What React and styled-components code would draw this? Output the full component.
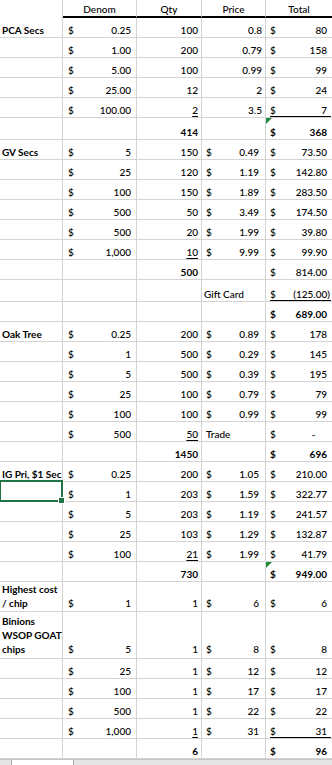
import React from 'react';
import styled, { createGlobalStyle } from 'styled-components';

const GRID = '#d4d4d4';
const GREEN = '#217346';

const GlobalStyle = createGlobalStyle`
  html, body { margin: 0; padding: 0; background: #ffffff; }
  body {
    font-family: Lato, "Open Sans", "Liberation Sans", sans-serif;
    font-size: 10px;
    color: #000;
    overflow: hidden;
  }
`;

const Page = styled.div`
  width: 332px;
  height: 765px;
  display: flex;
  flex-direction: column;
  overflow: hidden;
`;

const Sheet = styled.div`
  display: flex;
  flex-direction: column;
  flex: none;
`;

const Row = styled.div`
  display: grid;
  grid-template-columns: 63px 74px 65px 64px 66px;
  height: ${p => p.$h}px;
  flex: none;
  & > *:last-child { border-right: none; }
`;

const Cell = styled.div`
  position: relative;
  box-sizing: border-box;
  min-width: 0;
  display: flex;
  align-items: flex-end;
  border-right: 1px solid ${GRID};
  border-bottom: 1px solid ${GRID};
  line-height: 14px;
  white-space: nowrap;
  padding-bottom: ${p => p.$pb ?? 0}px;
  font-weight: ${p => (p.$bold ? 700 : 500)};
`;

const HeadCell = styled(Cell)`
  justify-content: center;
  padding-bottom: 0;
  border-bottom: ${p => (p.$blank ? 'none' : '2px solid #000')};
`;

const LabelCell = styled(Cell)`
  font-weight: 700;
  padding-left: 2px;
  overflow: hidden;
`;

const SelectedCell = styled(Cell)`
  overflow: visible;
  z-index: 2;
`;

const NumCell = styled(Cell)`
  justify-content: flex-end;
  padding-right: 3px;
`;

const TextCell = styled(Cell)`
  padding-left: ${p => p.$pl}px;
`;

const AcctCell = styled(Cell)`
  padding-left: ${p => p.$pl}px;
  padding-right: ${p => p.$edge}px;
`;

const AcctBody = styled.div`
  flex: 1;
  display: flex;
  justify-content: space-between;
  align-items: flex-end;
  align-self: stretch;
  box-shadow: ${p => (p.$ul ? 'inset 0 -1px 0 #000' : 'none')};
`;

const Amount = styled.span`
  padding-right: ${p => p.$pr}px;
`;

const Dash = styled.span`
  padding-right: 4px;
  margin-right: 2ch;
`;

const Underlined = styled.span`
  text-decoration: underline;
  text-decoration-thickness: 1px;
  text-underline-offset: 1.5px;
`;

const Selection = styled.span`
  position: absolute;
  top: -2px;
  left: -1px;
  right: -1px;
  bottom: -1px;
  border: 2px solid ${GREEN};
  pointer-events: none;
`;

const Handle = styled.span`
  position: absolute;
  right: -3px;
  bottom: -3px;
  width: 5px;
  height: 5px;
  background: ${GREEN};
  box-shadow: 0 0 0 1px #ffffff;
`;

const ErrorMark = styled.span`
  position: absolute;
  top: 0;
  left: 0;
  width: 0;
  height: 0;
  border-top: 6px solid #1e8a3a;
  border-right: 6px solid transparent;
`;

const TabBar = styled.div`
  flex: 1;
  display: flex;
  background: #e6e6e6;
  border-top: 1px solid #c6c6c6;
`;

const TabGap = styled.div`
  width: 11px;
`;

const Tab = styled.div`
  width: 61px;
  background: #ffffff;
  border-left: 1px solid #a8a8a8;
  border-right: 1px solid #a8a8a8;
`;

/* column presets for accounting format */
const ACCT = {
  b: { pl: 5, edge: 1, pr: 4 },
  d: { pl: 4, edge: 2, pr: 4 },
  e: { pl: 4, edge: 1, pr: 4 },
};

const a = (v, o = {}) => ({ t: 'acct', v, ...o });
const n = (v, o = {}) => ({ t: 'num', v, ...o });

const rows = [
  { h: 20, a: ['PCA Secs'], b: a('0.25'), c: n('100'), d: n('0.8'), e: a('80') },
  { h: 20, b: a('1.00'), c: n('200'), d: n('0.79'), e: a('158') },
  { h: 20, b: a('5.00'), c: n('100'), d: n('0.99'), e: a('99') },
  { h: 20, b: a('25.00'), c: n('12'), d: n('2'), e: a('24') },
  { h: 20, b: a('100.00'), c: n('2', { u: true }), d: n('3.5'), e: a('7', { ul: true }) },
  { h: 22, c: n('414', { bold: true }), e: a('368', { bold: true, mark: true }) },
  { h: 20, a: ['GV Secs'], b: a('5'), c: n('150'), d: a('0.49'), e: a('73.50') },
  { h: 20, b: a('25'), c: n('120'), d: a('1.19'), e: a('142.80') },
  { h: 20, b: a('100'), c: n('150'), d: a('1.89'), e: a('283.50') },
  { h: 20, b: a('500'), c: n('50'), d: a('3.49'), e: a('174.50') },
  { h: 20, b: a('500'), c: n('20'), d: a('1.99'), e: a('39.80') },
  { h: 20, b: a('1,000'), c: n('10', { u: true }), d: a('9.99'), e: a('99.90') },
  { h: 20, c: n('500', { bold: true }), e: a('814.00') },
  { h: 22, d: { t: 'text', v: 'Gift Card', pl: 2 }, e: a('(125.00)', { neg: true, ul: true }) },
  { h: 20, e: a('689.00', { bold: true }) },
  { h: 20, a: ['Oak Tree'], b: a('0.25'), c: n('200'), d: a('0.89'), e: a('178') },
  { h: 20, b: a('1'), c: n('500'), d: a('0.29'), e: a('145') },
  { h: 20, b: a('5'), c: n('500'), d: a('0.39'), e: a('195') },
  { h: 20, b: a('25'), c: n('100'), d: a('0.79'), e: a('79') },
  { h: 20, b: a('100'), c: n('100'), d: a('0.99'), e: a('99') },
  { h: 20, b: a('500'), c: n('50', { u: true }), d: { t: 'text', v: 'Trade', pl: 4 }, e: a('-', { dash: true }) },
  { h: 20, c: n('1450', { bold: true }), e: a('696', { bold: true }) },
  { h: 20, a: ['IG Pri, $1 Sec'], b: a('0.25'), c: n('200'), d: a('1.05'), e: a('210.00') },
  { h: 20, selected: true, b: a('1'), c: n('203'), d: a('1.59'), e: a('322.77') },
  { h: 20, b: a('5'), c: n('203'), d: a('1.19'), e: a('241.57') },
  { h: 20, b: a('25'), c: n('103'), d: a('1.29'), e: a('132.87') },
  { h: 20, b: a('100'), c: n('21', { u: true }), d: a('1.99'), e: a('41.79') },
  { h: 20, c: n('730', { bold: true }), e: a('949.00', { bold: true, mark: true }) },
  { h: 30, pb: 1, a: ['Highest cost', '/ chip'], b: a('1'), c: n('1'), d: a('6'), e: a('6') },
  { h: 47, pb: 2, a: ['Binions', 'WSOP GOAT', 'chips'], b: a('5'), c: n('1'), d: a('8'), e: a('8') },
  { h: 20, b: a('25'), c: n('1'), d: a('12'), e: a('12') },
  { h: 20, b: a('100'), c: n('1'), d: a('17'), e: a('17') },
  { h: 20, b: a('500'), c: n('1'), d: a('22'), e: a('22') },
  { h: 20, b: a('1,000'), c: n('1', { u: true }), d: a('31'), e: a('31', { ul: true }) },
  { h: 20, c: n('6', { bold: true }), e: a('96', { bold: true }) },
];

function renderCell(col, data, pb, key) {
  if (!data) return <Cell key={key} $pb={pb} />;
  if (data.t === 'num') {
    return (
      <NumCell key={key} $pb={pb} $bold={data.bold}>
        {data.u ? <Underlined>{data.v}</Underlined> : data.v}
      </NumCell>
    );
  }
  if (data.t === 'text') {
    return (
      <TextCell key={key} $pb={pb} $pl={data.pl}>
        {data.v}
      </TextCell>
    );
  }
  const cfg = ACCT[col];
  return (
    <AcctCell key={key} $pb={pb} $pl={cfg.pl} $edge={cfg.edge} $bold={data.bold}>
      {data.mark && <ErrorMark />}
      <AcctBody $ul={data.ul}>
        <span>$</span>
        {data.dash ? (
          <Dash>{data.v}</Dash>
        ) : (
          <Amount $pr={data.neg ? 1 : cfg.pr}>{data.v}</Amount>
        )}
      </AcctBody>
    </AcctCell>
  );
}

function SheetRow({ row }) {
  const pb = row.pb ?? 0;
  let first;
  if (row.selected) {
    first = (
      <SelectedCell $pb={pb}>
        <Selection>
          <Handle />
        </Selection>
      </SelectedCell>
    );
  } else if (row.a) {
    first = (
      <LabelCell $pb={pb}>
        <span>
          {row.a.map((line, i) => (
            <React.Fragment key={i}>
              {i > 0 && <br />}
              {line}
            </React.Fragment>
          ))}
        </span>
      </LabelCell>
    );
  } else {
    first = <Cell $pb={pb} />;
  }
  return (
    <Row $h={row.h}>
      {first}
      {renderCell('b', row.b, pb, 'b')}
      {renderCell('c', row.c, pb, 'c')}
      {renderCell('d', row.d, pb, 'd')}
      {renderCell('e', row.e, pb, 'e')}
    </Row>
  );
}

export default function App() {
  return (
    <>
      <GlobalStyle />
      <Page>
        <Sheet>
          <Row $h={18}>
            <HeadCell $blank />
            <HeadCell>Denom</HeadCell>
            <HeadCell>Qty</HeadCell>
            <HeadCell>Price</HeadCell>
            <HeadCell>Total</HeadCell>
          </Row>
          {rows.map((row, i) => (
            <SheetRow key={i} row={row} />
          ))}
        </Sheet>
        <TabBar>
          <TabGap />
          <Tab />
        </TabBar>
      </Page>
    </>
  );
}
